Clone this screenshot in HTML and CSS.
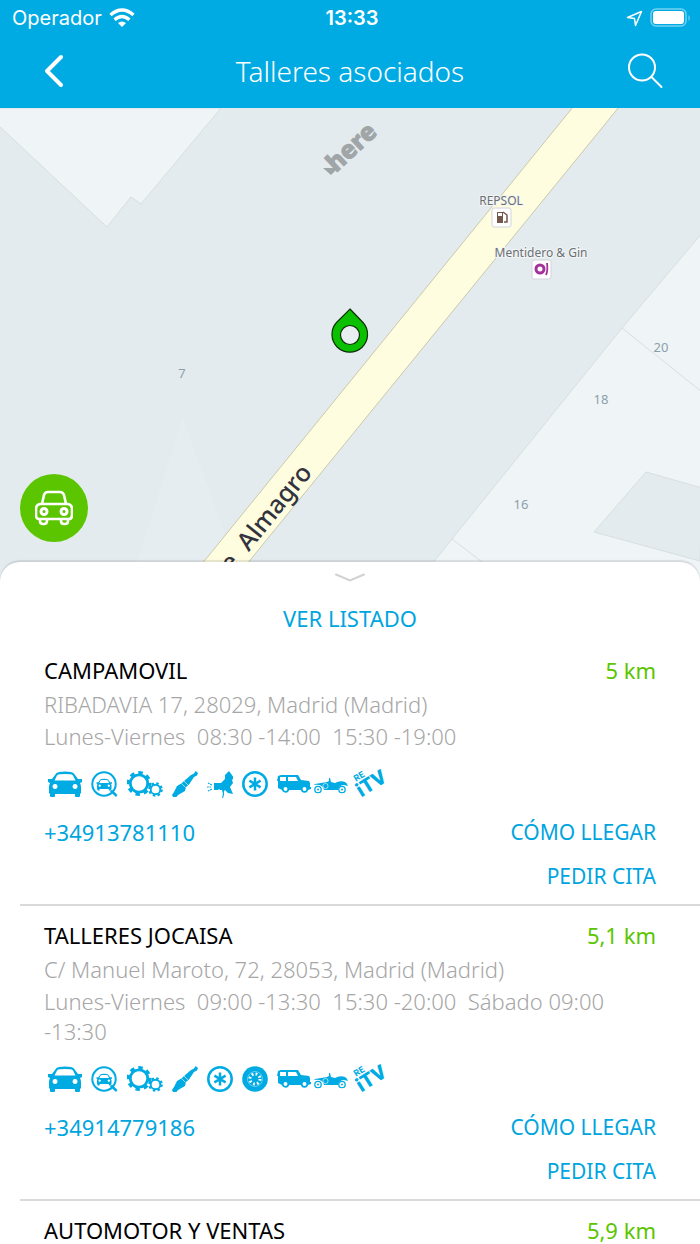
FILE: index.html
```html
<!doctype html>
<html lang="es">
	<head>
		<title>Talleres asociados</title>
		<meta charset="utf-8">
		<meta name="viewport" content="width=device-width, initial-scale=1.0">
		<link rel="stylesheet" href="styles.css">
	</head>
	<body>

<!-- icon sprite -->
<svg class="sprite" aria-hidden="true">
	<symbol id="car" viewBox="0 0 35 28">
		<path fill-rule="evenodd" d="M1 9h4L8 5Q9 2.500 12 2Q18 1 24 2Q27 2.500 28 5l3 4h4v3l-2 1q1 2 1 4v6l-1 1v2q0 1-1 1h-3q-1 0-1-1v-2H8v2q0 1-1 1H4q-1 0-1-1v-2l-1-1v-6q0-2 1-4l-2-1zM7.500 10.500h21L26 5.500Q25 4.300 23 4.200Q18 3.600 13 4.200Q11 4.300 10 5.500zM8 14a2.500 2.500 0 1 0 .1 0zM28 14a2.500 2.500 0 1 0 .1 0z"/>
	</symbol>
	<symbol id="check" viewBox="0 0 27 28">
		<circle cx="13" cy="14" r="11.700" fill="none" stroke="currentColor" stroke-width="2"/>
		<path d="M19 21.500l2-2 5.500 5.500-1.500 2z"/>
		<svg x="5" y="8" width="16" height="13" viewBox="0 0 35 28"><use href="#car"/></svg>
	</symbol>
	<symbol id="gears" viewBox="0 0 36 28">
		<circle cx="12" cy="13.500" r="8.700" fill="none" stroke="currentColor" stroke-width="2.800"/>
		<circle cx="12" cy="13.500" r="10.700" fill="none" stroke="currentColor" stroke-width="3.400" stroke-dasharray="4.400 4" stroke-dashoffset="1"/>
		<circle cx="28.500" cy="19.500" r="4.800" fill="none" stroke="currentColor" stroke-width="1.900"/>
		<circle cx="28.500" cy="19.500" r="6.200" fill="none" stroke="currentColor" stroke-width="2.200" stroke-dasharray="2.500 2.370"/>
	</symbol>
	<symbol id="plug" viewBox="0 0 26 28">
		<path d="M23.500 1l2.500 2-1 2.500-3 1.500-5 7.500-3 2.500-1 4-7 4-1.500 2L1 27l-1-2 2-3 3-6 5-3 2-2 7-6 3-1.500z"/>
		<path d="M9.500 13.500l4 4M12 11l4 4" stroke="#fff" stroke-width=".6"/>
	</symbol>
	<symbol id="spray" viewBox="0 0 26 28">
		<path d="M7 13h7l4-4v-4l4-4 5 7-2 2 1 3-3 4 3 7-5-1-3-3-1 1v4l-1 3h-1l1-4-1-4h-2l-1-1-1 1H7z"/>
		<path d="M1 13l4 2M0 17h4M1 21l4-2" fill="none" stroke="currentColor" stroke-width="1.200" stroke-dasharray="1.800 .7"/>
	</symbol>
	<symbol id="aircon" viewBox="0 0 26 28">
		<g fill="none" stroke="currentColor">
			<circle cx="13" cy="14" r="11.700" stroke-width="2.500"/>
			<path d="M13 7.500v13M7.400 10.700l11.200 6.600M18.600 10.700L7.400 17.300" stroke-width="2.500"/>
		</g>
	</symbol>
	<symbol id="tyre" viewBox="0 0 26 28">
		<circle cx="13" cy="14" r="12.800"/>
		<circle cx="13" cy="14" r="5" fill="none" stroke="#fff" stroke-width="3" stroke-dasharray="1.700 2.227"/>
		<circle cx="13" cy="14" r="7.500" fill="none" stroke="#fff" stroke-width=".4"/>
	</symbol>
	<symbol id="classics" viewBox="0 0 71 28">
		<!-- jeep -->
		<path fill-rule="evenodd" d="M1 6l3-1h17l3 5 8 1 1 2v4h1v2l-3 1a4 4 0 0 1-7 0H12a4 4 0 0 1-7 0l-4-2v-7L0 11zM3 7v4h6V7zM11 7v4h10l-2-4z"/>
		<circle cx="8.500" cy="19" r="2.800" fill="#fff" stroke="currentColor" stroke-width="1.700"/>
		<circle cx="27.500" cy="19" r="2.800" fill="#fff" stroke="currentColor" stroke-width="1.700"/>
		<!-- roadster -->
		<path d="M38 14l12-2 2-1V8h1l1 4 4 1q5-3 10-1 2 1 3 4l-4-1q-5 0-6 5H47q-1-6-10-5z"/>
		<circle cx="48.500" cy="16" r="2.600" fill="none" stroke="#fff" stroke-width=".6"/>
		<g fill="#fff" stroke="currentColor" stroke-width="1.300">
			<circle cx="41" cy="19.500" r="3.200"/>
			<circle cx="65" cy="19.500" r="3.200"/>
		</g>
		<circle cx="41" cy="19.500" r="1"/>
		<circle cx="65" cy="19.500" r="1"/>
	</symbol>
	<symbol id="itv" viewBox="0 0 28 28" overflow="visible">
		<g transform="rotate(-32 5 27)">
			<text class="itv-big" x="4" y="27">iTV</text>
			<text class="itv-small" x="8" y="11">RE</text>
		</g>
	</symbol>
</svg>

<div class="app">
	<header class="header">
		<div class="status">
			<div class="status-left">
				<span>Operador</span>
				<svg width="26" height="20" viewBox="0 0 26 20" aria-hidden="true">
					<g fill="none" stroke="#fff" stroke-width="3.400">
						<path d="M1.500 7q11.500-10 23 0"/>
						<path d="M5.600 11.800q7.400-6.500 14.800 0"/>
					</g>
					<path d="M9 15q4-3 8 0l-4 4z" fill="#fff"/>
				</svg>
			</div>
			<b>13:33</b>
			<div class="status-right">
				<svg width="17" height="17" viewBox="0 0 17 17" aria-hidden="true">
					<path d="M1.500 7.500L15.500 1.500 9.500 15.500 8.500 8.500z" fill="none" stroke="#fff" stroke-width="1.500" stroke-linejoin="round"/>
				</svg>
				<svg width="42" height="20" viewBox="0 0 42 20" aria-hidden="true">
					<rect x="1" y="1" width="35" height="17" rx="5" fill="none" stroke="#fff" stroke-opacity=".45" stroke-width="1.500"/>
					<rect x="3" y="3" width="31" height="13" rx="3" fill="#fff"/>
					<path d="M38.500 7q2.500 3 0 6z" fill="#fff" fill-opacity=".5"/>
				</svg>
			</div>
		</div>
		<div class="navbar">
			<button class="nav-button" aria-label="Volver">
				<svg width="36" height="36" viewBox="0 0 36 36"><path d="M25 4L11 18l14 14" fill="none" stroke="#fff" stroke-width="4" stroke-linecap="round" stroke-linejoin="round"/></svg>
			</button>
			<h1>Talleres asociados</h1>
			<button class="nav-button" aria-label="Buscar">
				<svg width="36" height="36" viewBox="0 0 36 36"><g fill="none" stroke="#fff" stroke-width="2" stroke-linecap="round"><circle cx="14" cy="14.500" r="13"/><path d="M23.500 24l10 10"/></g></svg>
			</button>
		</div>
	</header>

	<div class="map">
		<svg class="map-canvas" viewBox="0 108 700 478" preserveAspectRatio="xMidYMin slice" role="img" aria-label="Mapa">
			<path class="cone" d="M183 418L137 562l-8 24h118l-12-24z"/>
			<g class="building">
				<path d="M-2 108H221L141 204l-10-7-24 30L-2 125z"/>
				<path d="M702 233l-80 95L452 539l-40 50h290z"/>
				<path d="M622 328l80 64M452 539l60 46"/>
				<path class="yard" d="M702 488l-56-16-52 60 106 29z"/>
			</g>
			<path class="road" d="M573 107L184 586h45L619 107z"/>

			<text class="street" x="313" y="473" transform="rotate(-51 313 473)">de&#160; Almagro</text>

			<g class="number">
				<text x="182" y="378">7</text>
				<text x="661" y="352">20</text>
				<text x="601" y="404">18</text>
				<text x="521" y="509">16</text>
			</g>

			<!-- places -->
			<g class="place">
				<text x="501" y="205">REPSOL</text>
				<rect x="492" y="208" width="19" height="19" rx="2"/>
				<path d="M497 212h6v11h-6z" fill="#74584c"/>
				<path d="M498 213h4v3h-4z" fill="#fff"/>
				<path d="M503 212l4 3v7h-3" fill="none" stroke="#74584c" stroke-width="1.500"/>
				<text x="541" y="257">Mentidero &amp; Gin</text>
				<rect x="532" y="260" width="19" height="19" rx="2"/>
				<circle cx="540" cy="269" r="4" fill="none" stroke="#a3329a" stroke-width="3"/>
				<path d="M547 263q1 8-1 12" fill="none" stroke="#a3329a" stroke-width="1.800"/>
			</g>

			<g class="here">
				<text x="336" y="173" transform="rotate(-43 336 173)">here</text>
				<path d="M323 168h15l-7 7z"/>
			</g>

			<path class="pin" d="M350 309l13 13.500a17.800 17.800 0 1 1-26.500 0z"/>
			<circle class="pin-hole" cx="350" cy="335" r="9.500"/>
		</svg>
		<button class="fab" aria-label="Mi coche">
			<svg width="38" height="36" viewBox="0 0 38 36">
				<g fill="none" stroke="#fff" stroke-width="2.600" stroke-linejoin="round">
					<path d="M7 14l2-9q1-3 4-3h12q3 0 4 3l2 9"/>
					<path d="M5 14h28q4 1 4 5v6q0 4-3 4H4q-3 0-3-4v-6q0-4 4-5z"/>
					<path d="M5 29v2q0 3 3 3h1q3 0 3-3v-2M26 29v2q0 3 3 3h1q3 0 3-3v-2"/>
				</g>
				<g fill="none" stroke="#fff" stroke-width="3">
					<circle cx="9" cy="21.500" r="3"/>
					<circle cx="29" cy="21.500" r="3"/>
				</g>
			</svg>
		</button>
	</div>

	<main class="sheet">
		<button class="handle" aria-label="Ocultar listado">
			<svg width="32" height="12" viewBox="0 0 32 12"><path d="M2 2.500l14 6 14-6" fill="none" stroke="#d2d2d2" stroke-width="2" stroke-linecap="round"/></svg>
		</button>
		<button class="link-button show-list">VER LISTADO</button>

		<article class="garage">
			<div class="title-row">
				<h2>CAMPAMOVIL</h2>
				<span class="distance">5 km</span>
			</div>
			<p class="address">RIBADAVIA 17, 28029, Madrid (Madrid)</p>
			<p class="hours">Lunes-Viernes&#160; 08:30 -14:00&#160; 15:30 -19:00</p>
			<div class="services" aria-hidden="true">
				<svg width="35" height="28"><use href="#car"/></svg>
				<svg width="27" height="28"><use href="#check"/></svg>
				<svg width="36" height="28"><use href="#gears"/></svg>
				<svg width="26" height="28"><use href="#plug"/></svg>
				<svg width="26" height="28"><use href="#spray"/></svg>
				<svg width="26" height="28"><use href="#aircon"/></svg>
				<svg width="71" height="28"><use href="#classics"/></svg>
				<svg width="28" height="28"><use href="#itv"/></svg>
			</div>
			<div class="actions">
				<a class="phone" href="tel:+34913781110">+34913781110</a>
				<button class="link-button">CÓMO LLEGAR</button>
				<button class="link-button">PEDIR CITA</button>
			</div>
		</article>

		<article class="garage">
			<div class="title-row">
				<h2>TALLERES JOCAISA</h2>
				<span class="distance">5,1 km</span>
			</div>
			<p class="address">C/ Manuel Maroto, 72, 28053, Madrid (Madrid)</p>
			<p class="hours">Lunes-Viernes&#160; 09:00 -13:30&#160; 15:30 -20:00&#160; Sábado 09:00 -13:30</p>
			<div class="services" aria-hidden="true">
				<svg width="35" height="28"><use href="#car"/></svg>
				<svg width="27" height="28"><use href="#check"/></svg>
				<svg width="36" height="28"><use href="#gears"/></svg>
				<svg width="26" height="28"><use href="#plug"/></svg>
				<svg width="26" height="28"><use href="#aircon"/></svg>
				<svg width="26" height="28"><use href="#tyre"/></svg>
				<svg width="71" height="28"><use href="#classics"/></svg>
				<svg width="28" height="28"><use href="#itv"/></svg>
			</div>
			<div class="actions">
				<a class="phone" href="tel:+34914779186">+34914779186</a>
				<button class="link-button">CÓMO LLEGAR</button>
				<button class="link-button">PEDIR CITA</button>
			</div>
		</article>

		<article class="garage">
			<div class="title-row">
				<h2>AUTOMOTOR Y VENTAS</h2>
				<span class="distance">5,9 km</span>
			</div>
		</article>
	</main>
</div>

	</body>
</html>
```
FILE: styles.css
```css
* {
	box-sizing: border-box;
	margin: 0;
	padding: 0;
}
body {
	background: #fff;
	color: #000;
	font-family: 'Noto Sans', sans-serif;
	font-size: 22px;
	font-weight: 400;
}
button {
	border: 0;
	background: none;
	font: inherit;
	color: inherit;
	cursor: pointer;
}
svg { display: block; }
.sprite { display: none; }
.app { height: 100vh; overflow: hidden; }

/* header */
.header { background: #00abe4; color: #fff; }
.status {
	display: grid;
	grid-template-columns: 1fr auto 1fr;
	align-items: center;
	height: 36px;
	padding: 0 8px 0 12px;
	font-family: Inter, sans-serif;
	font-size: 20px;
}
.status b { font-weight: 600; }
.status-left, .status-right { display: flex; align-items: center; gap: 7px; }
.status-right { justify-content: flex-end; }
.navbar {
	display: flex;
	align-items: center;
	justify-content: space-between;
	height: 72px;
	padding: 0 36px 2px;
}
.navbar h1 { font-size: 28px; font-weight: 300; }

/* map */
.map { position: relative; background: #e4ebee; }
.map-canvas { width: 100%; }
.cone { fill: #e6edf0; }
.building path { fill: #eff4f7; stroke: #d8dee0; }
.building .yard { fill: #e4ebee; }
.road { fill: #fffddf; stroke: #c9c9ac; }
.street { font-size: 25px; font-weight: 500; fill: #333340; text-anchor: end; }
.number text { font-size: 13px; fill: #8ca0a8; text-anchor: middle; }
.place text {
	font-size: 12px;
	fill: #6b7073;
	stroke: #f2f5f6;
	stroke-width: 2px;
	paint-order: stroke;
	text-anchor: middle;
}
.place rect { fill: #fff; stroke: #d3d3dc; }
.here { fill: #a0a5a7; }
.here text { font-size: 25px; font-weight: 800; stroke: #a0a5a7; }
.pin { fill: #0bc000; stroke: #0a3006; stroke-width: 1.2px; }
.pin-hole { fill: #e9eff1; stroke: #0a3006; stroke-width: 1.2px; }
.fab {
	position: absolute;
	left: 20px;
	bottom: 44px;
	display: flex;
	align-items: center;
	justify-content: center;
	width: 68px;
	height: 68px;
	border-radius: 50%;
	background: #5bc500;
}

/* list */
.sheet {
	position: relative;
	margin-top: -24px;
	border-radius: 20px 20px 0 0;
	background: #fff;
	box-shadow: 0 -2px 1px rgba(0, 0, 0, .1);
}
.handle, .show-list { display: block; margin: 0 auto; }
.handle { height: 32px; padding: 0 20px; }
.show-list { height: 47px; }
.link-button, .phone { color: #00a5e0; text-decoration: none; }
.link-button { font-size: 21px; }
.show-list { font-size: 22px; }
.garage {
	margin-left: 20px;
	padding: 12px 44px 6px 24px;
	border-bottom: 2px solid #dadada;
}
.title-row { display: flex; justify-content: space-between; line-height: 34px; }
.title-row h2 { font-size: 22px; font-weight: 400; }
.distance { color: #5bc500; }
.address, .hours { color: #a6a6a6; font-weight: 300; }
.address { line-height: 34px; }
.hours { line-height: 30px; }
.services {
	display: flex;
	gap: 9px;
	margin: 19px 0 12px 3px;
	color: #00abe4;
	fill: currentColor;
}
.services svg { overflow: visible; }
.itv-big { font: 900 20px Roboto, sans-serif; }
.itv-small { font: bold 9px Roboto, sans-serif; }
.actions {
	display: grid;
	grid-template-columns: 1fr auto;
	grid-auto-rows: 44px;
	align-items: center;
	justify-items: end;
}
.actions .phone { justify-self: start; }
.actions .link-button { grid-column: 2; }
```
